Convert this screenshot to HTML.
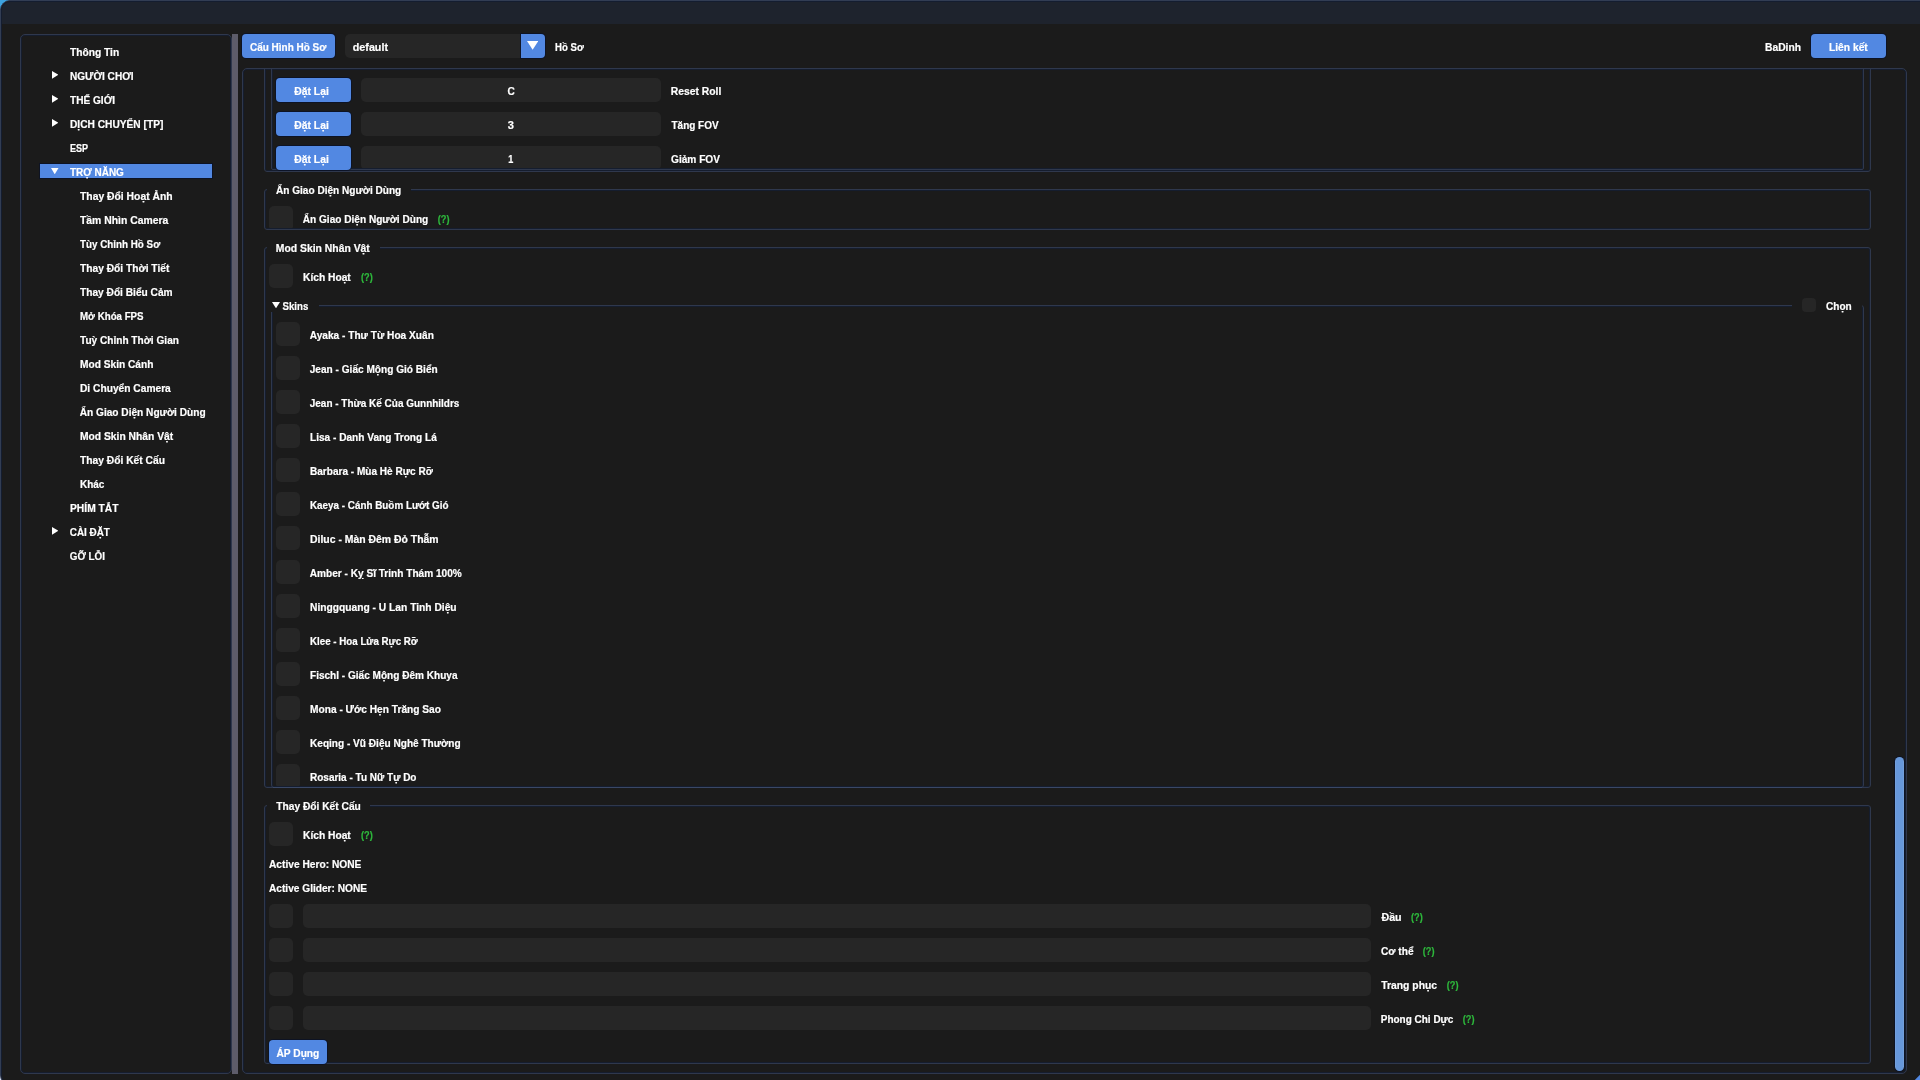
<!DOCTYPE html>
<html lang="vi"><head><meta charset="utf-8"><title>Menu</title>
<style>
html,body{margin:0;padding:0;width:1920px;height:1080px;overflow:hidden;background:#1b1b1b}
body{position:relative;font-family:"Liberation Sans",sans-serif}
body div,body svg,body span{position:absolute;display:block;box-sizing:content-box}
.fr{border:1px solid #2f384d;box-shadow:inset 0 0 0 1px #151d2e;background:transparent}
.t{font:bold 11px/14px "Liberation Sans",sans-serif;color:#fff;white-space:nowrap;transform-origin:0 50%;letter-spacing:0;-webkit-text-stroke:0.2px currentColor}
</style></head>
<body>
<div style="left:0px;top:0px;width:12px;height:12px;background:#3da3e0;"></div>
<div style="left:0px;top:1068px;width:12px;height:12px;background:#d9e2f6;"></div>
<div style="left:0;top:0;width:1940px;height:1083px;border:1px solid #323d54;border-radius:10px;background:#1b1b1b;overflow:hidden"><div style="left:0;top:0;width:1940px;height:23px;background:#1e232d"></div><div style="left:0;top:0;width:1938px;height:1081px;border:1px solid #141d30;border-radius:9px"></div></div>
<svg style="left:1910px;top:1070px" width="10" height="10" viewBox="0 0 10 10"><path d="M10 4.8L4.8 10L10 10Z" fill="#5288e2"/></svg>
<div class="fr" style="left:20px;top:34px;width:210px;height:1038px;border-radius:5px;"></div>
<div style="left:232px;top:34px;width:6px;height:1040px;background:#5d5c6a;"></div>
<svg style="left:51.8px;top:71.2px" width="6.4" height="7.7" viewBox="0 0 6.4 7.7"><path d="M0 0L6.4 3.85L0 7.7Z" fill="#fff"/></svg>
<svg style="left:51.8px;top:95.2px" width="6.4" height="7.7" viewBox="0 0 6.4 7.7"><path d="M0 0L6.4 3.85L0 7.7Z" fill="#fff"/></svg>
<svg style="left:51.8px;top:119.2px" width="6.4" height="7.7" viewBox="0 0 6.4 7.7"><path d="M0 0L6.4 3.85L0 7.7Z" fill="#fff"/></svg>
<div style="left:40px;top:164px;width:172px;height:14px;background:#5288e2;box-shadow:0 0 0 1px rgba(10,18,40,.75);"></div>
<svg style="left:51.25px;top:167.75px" width="7.5" height="6.25" viewBox="0 0 7.5 6.25"><path d="M0 0L7.5 0L3.75 6.25Z" fill="#fff"/></svg>
<svg style="left:51.8px;top:527.2px" width="6.4" height="7.7" viewBox="0 0 6.4 7.7"><path d="M0 0L6.4 3.85L0 7.7Z" fill="#fff"/></svg>
<div style="left:242px;top:34px;width:93px;height:24px;background:#5288e2;border-radius:4px;box-shadow:0 0 0 1px rgba(10,18,40,.75);"></div>
<div style="left:345px;top:34px;width:200px;height:24px;background:#262626;border-radius:5px;"></div>
<div style="left:521px;top:34px;width:24px;height:24px;background:#5288e2;border-radius:0 4px 4px 0;box-shadow:0 0 0 1px rgba(10,18,40,.75);"></div>
<svg style="left:527.2px;top:41.3px" width="11.3" height="8.8" viewBox="0 0 11.3 8.8"><path d="M0 0L11.3 0L5.65 8.8Z" fill="#fff"/></svg>
<div style="left:1811px;top:34px;width:75px;height:24px;background:#5288e2;border-radius:4px;box-shadow:0 0 0 1px rgba(10,18,40,.75);"></div>
<div class="fr" style="left:242px;top:68px;width:1663px;height:1004px;border-radius:5px;"></div>
<div style="left:1895px;top:757px;width:9px;height:314px;background:#6798db;border-radius:4.5px;box-shadow:0 0 0 1px rgba(10,18,40,.75);border:0 solid;background:linear-gradient(90deg,#7aa3da 0,#6798db 1.5px,#6798db 7.5px,#7aa3da 9px);"></div>
<div style="left:361px;top:78px;width:300px;height:24px;background:#262626;border-radius:5px;"></div>
<div style="left:361px;top:112px;width:300px;height:24px;background:#262626;border-radius:5px;"></div>
<div style="left:361px;top:146px;width:300px;height:24px;background:#262626;border-radius:5px;"></div>
<div style="left:243px;top:69px;width:1663px;height:120px;overflow:hidden;background:transparent"><div class="fr" style="left:21px;top:-30px;width:1605px;height:131px;border-radius:3px"></div><div class="fr" style="left:28px;top:-30px;width:1591px;height:129px;border-radius:2px"></div></div>
<div style="left:361px;top:170px;width:300px;height:1px;background:#151d2e;"></div>
<div style="left:276px;top:78px;width:75px;height:24px;background:#5288e2;border-radius:4px;box-shadow:0 0 0 1px rgba(10,18,40,.75);"></div>
<div style="left:276px;top:112px;width:75px;height:24px;background:#5288e2;border-radius:4px;box-shadow:0 0 0 1px rgba(10,18,40,.75);"></div>
<div style="left:276px;top:146px;width:75px;height:24px;background:#5288e2;border-radius:4px;box-shadow:0 0 0 1px rgba(10,18,40,.75);"></div>
<div class="fr" style="left:264px;top:189px;width:1605px;height:39px;border-radius:3px;"></div>
<div style="left:267px;top:189px;width:143.7px;height:2px;background:#1b1b1b;"></div>
<div style="left:269px;top:206px;width:24px;height:22px;background:#262626;border-radius:5px 5px 1px 1px;"></div>
<div class="fr" style="left:264px;top:247px;width:1605px;height:539px;border-radius:3px;"></div>
<div style="left:267px;top:247px;width:112.5px;height:2px;background:#1b1b1b;"></div>
<div style="left:269px;top:264px;width:24px;height:24px;background:#262626;border-radius:5px;"></div>
<div class="fr" style="left:271px;top:305px;width:1591px;height:481px;border-radius:3px;"></div>
<div style="left:272px;top:305px;width:1590px;height:2px;background:#1b1b1b;"></div>
<div style="left:1792px;top:305px;width:70px;height:2px;background:#1b1b1b;"></div>
<div style="left:319px;top:305px;width:1473px;height:1px;background:#2f384d"></div>
<div style="left:319px;top:306px;width:1473px;height:1px;background:#151d2e"></div>
<div style="left:273px;top:787px;width:1589px;height:1px;background:#3a4866;"></div>
<div style="left:271px;top:305px;width:2px;height:7px;background:#1b1b1b;"></div>
<svg style="left:272px;top:302px" width="8" height="6.3" viewBox="0 0 8 6.3"><path d="M0 0L8 0L4.0 6.3Z" fill="#fff"/></svg>
<div style="left:1802px;top:298px;width:14px;height:14px;background:#262626;border-radius:4px;"></div>
<div style="left:276px;top:322px;width:24px;height:24px;background:#262626;border-radius:5px;"></div>
<div style="left:276px;top:356px;width:24px;height:24px;background:#262626;border-radius:5px;"></div>
<div style="left:276px;top:390px;width:24px;height:24px;background:#262626;border-radius:5px;"></div>
<div style="left:276px;top:424px;width:24px;height:24px;background:#262626;border-radius:5px;"></div>
<div style="left:276px;top:458px;width:24px;height:24px;background:#262626;border-radius:5px;"></div>
<div style="left:276px;top:492px;width:24px;height:24px;background:#262626;border-radius:5px;"></div>
<div style="left:276px;top:526px;width:24px;height:24px;background:#262626;border-radius:5px;"></div>
<div style="left:276px;top:560px;width:24px;height:24px;background:#262626;border-radius:5px;"></div>
<div style="left:276px;top:594px;width:24px;height:24px;background:#262626;border-radius:5px;"></div>
<div style="left:276px;top:628px;width:24px;height:24px;background:#262626;border-radius:5px;"></div>
<div style="left:276px;top:662px;width:24px;height:24px;background:#262626;border-radius:5px;"></div>
<div style="left:276px;top:696px;width:24px;height:24px;background:#262626;border-radius:5px;"></div>
<div style="left:276px;top:730px;width:24px;height:24px;background:#262626;border-radius:5px;"></div>
<div style="left:276px;top:764px;width:24px;height:22px;background:#262626;border-radius:5px 5px 1px 1px;"></div>
<div class="fr" style="left:264px;top:805px;width:1605px;height:257px;border-radius:3px;"></div>
<div style="left:267px;top:805px;width:103px;height:2px;background:#1b1b1b;"></div>
<div style="left:269px;top:822px;width:24px;height:24px;background:#262626;border-radius:5px;"></div>
<div style="left:269px;top:904px;width:24px;height:24px;background:#262626;border-radius:5px;"></div>
<div style="left:303px;top:904px;width:1068px;height:24px;background:#262626;border-radius:5px;"></div>
<div style="left:269px;top:938px;width:24px;height:24px;background:#262626;border-radius:5px;"></div>
<div style="left:303px;top:938px;width:1068px;height:24px;background:#262626;border-radius:5px;"></div>
<div style="left:269px;top:972px;width:24px;height:24px;background:#262626;border-radius:5px;"></div>
<div style="left:303px;top:972px;width:1068px;height:24px;background:#262626;border-radius:5px;"></div>
<div style="left:269px;top:1006px;width:24px;height:24px;background:#262626;border-radius:5px;"></div>
<div style="left:303px;top:1006px;width:1068px;height:24px;background:#262626;border-radius:5px;"></div>
<div style="left:269px;top:1040px;width:58px;height:24px;background:#5288e2;border-radius:4px;box-shadow:0 0 0 1px rgba(10,18,40,.75);"></div>
<div id="txt" style="left:0;top:0;width:1920px;height:1080px;will-change:transform">
<span class="t" style="left:70px;top:45px;transform:scaleX(0.9292)">Thông Tin</span>
<span class="t" style="left:70px;top:69px;transform:scaleX(0.9147)">NGƯỜI CHƠI</span>
<span class="t" style="left:70px;top:93px;transform:scaleX(0.9173)">THẾ GIỚI</span>
<span class="t" style="left:70px;top:117px;transform:scaleX(0.9256)">DỊCH CHUYỂN [TP]</span>
<span class="t" style="left:70px;top:141px;transform:scaleX(0.8230)">ESP</span>
<span class="t" style="left:70px;top:165px;transform:scaleX(0.9054)">TRỢ NĂNG</span>
<span class="t" style="left:80px;top:189px;transform:scaleX(0.9410)">Thay Đổi Hoạt Ảnh</span>
<span class="t" style="left:80px;top:213px;transform:scaleX(0.9435)">Tầm Nhìn Camera</span>
<span class="t" style="left:80px;top:237px;transform:scaleX(0.8934)">Tùy Chỉnh Hồ Sơ</span>
<span class="t" style="left:80px;top:261px;transform:scaleX(0.9278)">Thay Đổi Thời Tiết</span>
<span class="t" style="left:80px;top:285px;transform:scaleX(0.9237)">Thay Đổi Biểu Cảm</span>
<span class="t" style="left:80px;top:309px;transform:scaleX(0.8832)">Mở Khóa FPS</span>
<span class="t" style="left:80px;top:333px;transform:scaleX(0.9172)">Tuỳ Chỉnh Thời Gian</span>
<span class="t" style="left:80px;top:357px;transform:scaleX(0.9238)">Mod Skin Cánh</span>
<span class="t" style="left:80px;top:381px;transform:scaleX(0.9282)">Di Chuyển Camera</span>
<span class="t" style="left:79px;top:405px;transform:translateX(0.75px) scaleX(0.9198)">Ẩn Giao Diện Người Dùng</span>
<span class="t" style="left:80px;top:429px;transform:scaleX(0.9354)">Mod Skin Nhân Vật</span>
<span class="t" style="left:80px;top:453px;transform:scaleX(0.9325)">Thay Đổi Kết Cấu</span>
<span class="t" style="left:80px;top:477px;transform:scaleX(0.9080)">Khác</span>
<span class="t" style="left:70px;top:501px;transform:scaleX(0.9340)">PHÍM TẮT</span>
<span class="t" style="left:69px;top:525px;transform:translateX(0.75px) scaleX(0.8984)">CÀI ĐẶT</span>
<span class="t" style="left:69px;top:549px;transform:translateX(0.75px) scaleX(0.8957)">GỠ LỖI</span>
<span class="t" style="left:250px;top:40px;transform:scaleX(0.9061)">Cấu Hình Hồ Sơ</span>
<span class="t" style="left:352px;top:40px;transform:translateX(0.75px) scaleX(0.9778)">default</span>
<span class="t" style="left:555px;top:40px;transform:scaleX(0.8744)">Hồ Sơ</span>
<span class="t" style="left:1765px;top:40px;transform:scaleX(0.9334)">BaDinh</span>
<span class="t" style="left:1829px;top:40px;transform:scaleX(0.9331)">Liên kết</span>
<span class="t" style="left:294px;top:84px;transform:translateX(0.25px) scaleX(0.9431)">Đặt Lại</span>
<span class="t" style="left:507px;top:84px;transform:translateX(0.5px) scaleX(0.9156)">C</span>
<span class="t" style="left:670px;top:84px;transform:translateX(0.75px) scaleX(0.9401)">Reset Roll</span>
<span class="t" style="left:294px;top:118px;transform:translateX(0.25px) scaleX(0.9431)">Đặt Lại</span>
<span class="t" style="left:507px;top:118px;transform:translateX(0.75px) scaleX(1.0104)">3</span>
<span class="t" style="left:671px;top:118px;transform:translateX(0.5px) scaleX(0.9070)">Tăng FOV</span>
<span class="t" style="left:294px;top:152px;transform:translateX(0.25px) scaleX(0.9431)">Đặt Lại</span>
<span class="t" style="left:508px;top:152px;transform:translateX(0.25px) scaleX(0.8237)">1</span>
<span class="t" style="left:671px;top:152px;transform:scaleX(0.9212)">Giảm FOV</span>
<span class="t" style="left:276px;top:183px;transform:scaleX(0.9159)">Ẩn Giao Diện Người Dùng</span>
<span class="t" style="left:302px;top:212px;transform:translateX(0.75px) scaleX(0.9175)">Ẩn Giao Diện Người Dùng</span>
<span class="t" style="left:437px;top:212px;color:#2eb83c;transform:translateX(0.75px) scaleX(0.8383)">(?)</span>
<span class="t" style="left:275px;top:241px;transform:translateX(0.75px) scaleX(0.9442)">Mod Skin Nhân Vật</span>
<span class="t" style="left:303px;top:270px;transform:scaleX(0.9302)">Kích Hoạt</span>
<span class="t" style="left:361px;top:270px;color:#2eb83c;transform:scaleX(0.8383)">(?)</span>
<span class="t" style="left:282px;top:299px;transform:translateX(0.5px) scaleX(0.8776)">Skins</span>
<span class="t" style="left:1826px;top:299px;transform:scaleX(0.9153)">Chọn</span>
<span class="t" style="left:309px;top:328px;transform:translateX(0.75px) scaleX(0.9212)">Ayaka - Thư Từ Hoa Xuân</span>
<span class="t" style="left:309px;top:362px;transform:translateX(0.75px) scaleX(0.9181)">Jean - Giấc Mộng Gió Biển</span>
<span class="t" style="left:309px;top:396px;transform:translateX(0.75px) scaleX(0.9067)">Jean - Thừa Kế Của Gunnhildrs</span>
<span class="t" style="left:310px;top:430px;transform:scaleX(0.9176)">Lisa - Danh Vang Trong Lá</span>
<span class="t" style="left:310px;top:464px;transform:scaleX(0.9140)">Barbara - Mùa Hè Rực Rỡ</span>
<span class="t" style="left:310px;top:498px;transform:scaleX(0.8966)">Kaeya - Cánh Buồm Lướt Gió</span>
<span class="t" style="left:310px;top:532px;transform:scaleX(0.9479)">Diluc - Màn Đêm Đỏ Thẫm</span>
<span class="t" style="left:309px;top:566px;transform:translateX(0.75px) scaleX(0.9177)">Amber - Kỵ Sĩ Trinh Thám 100%</span>
<span class="t" style="left:310px;top:600px;transform:scaleX(0.9312)">Ninggquang - U Lan Tinh Diệu</span>
<span class="t" style="left:310px;top:634px;transform:scaleX(0.8867)">Klee - Hoa Lửa Rực Rỡ</span>
<span class="t" style="left:310px;top:668px;transform:scaleX(0.9142)">Fischl - Giấc Mộng Đêm Khuya</span>
<span class="t" style="left:310px;top:702px;transform:scaleX(0.9248)">Mona - Ước Hẹn Trăng Sao</span>
<span class="t" style="left:310px;top:736px;transform:scaleX(0.9165)">Keqing - Vũ Điệu Nghê Thường</span>
<span class="t" style="left:310px;top:770px;transform:scaleX(0.9086)">Rosaria - Tu Nữ Tự Do</span>
<span class="t" style="left:276px;top:799px;transform:translateX(0.25px) scaleX(0.9285)">Thay Đổi Kết Cấu</span>
<span class="t" style="left:303px;top:828px;transform:scaleX(0.9302)">Kích Hoạt</span>
<span class="t" style="left:361px;top:828px;color:#2eb83c;transform:scaleX(0.8383)">(?)</span>
<span class="t" style="left:269px;top:857px;transform:scaleX(0.9269)">Active Hero: NONE</span>
<span class="t" style="left:269px;top:881px;transform:scaleX(0.9221)">Active Glider: NONE</span>
<span class="t" style="left:1381px;top:910px;transform:translateX(0.5px) scaleX(0.9684)">Đầu</span>
<span class="t" style="left:1411px;top:910px;color:#2eb83c;transform:scaleX(0.8383)">(?)</span>
<span class="t" style="left:1381px;top:944px;transform:scaleX(0.9203)">Cơ thể</span>
<span class="t" style="left:1422px;top:944px;color:#2eb83c;transform:translateX(0.75px) scaleX(0.8383)">(?)</span>
<span class="t" style="left:1381px;top:978px;transform:translateX(0.25px) scaleX(0.9409)">Trang phục</span>
<span class="t" style="left:1446px;top:978px;color:#2eb83c;transform:translateX(0.75px) scaleX(0.8383)">(?)</span>
<span class="t" style="left:1380px;top:1012px;transform:translateX(0.75px) scaleX(0.9067)">Phong Chi Dực</span>
<span class="t" style="left:1462px;top:1012px;color:#2eb83c;transform:translateX(0.75px) scaleX(0.8383)">(?)</span>
<span class="t" style="left:276px;top:1046px;transform:translateX(0.5px) scaleX(0.9257)">ÁP Dụng</span>
</div>
</body></html>
